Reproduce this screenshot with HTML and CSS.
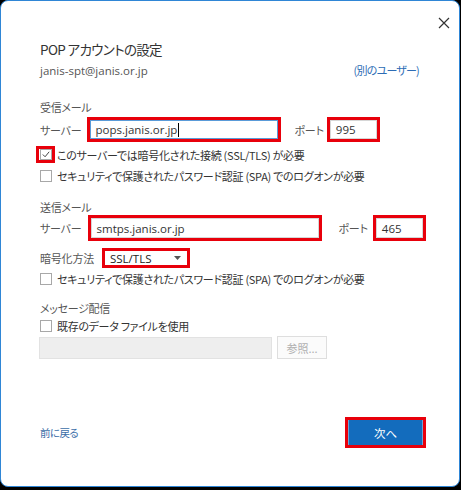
FILE: index.html
```html
<!DOCTYPE html>
<html lang="ja">
<head>
<meta charset="utf-8">
<link rel="stylesheet" href="styles.css">
</head>
<body>
<div class="win">
  <div class="topbar">
    <svg class="close" width="12" height="12" viewBox="0 0 12 12"><path d="M1 1L11 11M11 1L1 11" stroke="#333" stroke-width="1.2" fill="none"/></svg>
  </div>
  <div class="content">
    <div class="title">POP アカウントの設定</div>
    <div class="userrow">
      <span class="email">janis-spt@janis.or.jp</span>
      <span class="other">(別のユーザー)</span>
    </div>

    <div class="section">受信メール</div>
    <div class="row srv1">
      <span class="lbl">サーバー</span>
      <div class="mark host1"><div class="field focus">pops.janis.or.jp<span class="caret"></span></div></div>
      <span class="lbl port-lbl1">ポート</span>
      <div class="mark port1"><div class="field">995</div></div>
    </div>
    <div class="row chk1">
      <div class="mark cbmark"><span class="cb checked"><svg width="11" height="11" viewBox="0 0 11 11"><path d="M2 5.5L4.5 8L9 2.5" stroke="#444" stroke-width="1.1" fill="none"/></svg></span></div>
      <span class="cbtext">このサーバーでは暗号化された接続 (SSL/TLS) が必要</span>
    </div>
    <div class="row chk2">
      <span class="cb"></span>
      <span class="cbtext">セキュリティで保護されたパスワード認証 (SPA) でのログオンが必要</span>
    </div>

    <div class="section sec2">送信メール</div>
    <div class="row srv2">
      <span class="lbl">サーバー</span>
      <div class="mark host2"><div class="field">smtps.janis.or.jp</div></div>
      <span class="lbl port-lbl2">ポート</span>
      <div class="mark port2"><div class="field">465</div></div>
    </div>
    <div class="row enc">
      <span class="lbl">暗号化方法</span>
      <div class="mark sel"><div class="select">SSL/TLS<svg class="arrow" width="7" height="4" viewBox="0 0 7 4"><path d="M0 0H7L3.5 4Z" fill="#555"/></svg></div></div>
    </div>
    <div class="row chk3">
      <span class="cb"></span>
      <span class="cbtext">セキュリティで保護されたパスワード認証 (SPA) でのログオンが必要</span>
    </div>

    <div class="section sec3">メッセージ配信</div>
    <div class="row chk4">
      <span class="cb"></span>
      <span class="cbtext">既存のデータ ファイルを使用</span>
    </div>
    <div class="row filerow">
      <div class="disfield"></div>
      <div class="browse">参照...</div>
    </div>

    <div class="footer">
      <span class="back">前に戻る</span>
      <div class="mark nextmark"><div class="next">次へ</div></div>
    </div>
  </div>
</div>
</body>
</html>
```

FILE: styles.css
```css
html, body {
  margin: 0;
  padding: 0;
  background: #000;
}
body {
  width: 461px;
  height: 490px;
  font-family: "Noto Sans CJK JP", "Noto Sans", sans-serif;
  font-feature-settings: "palt";
  color: #333;
  white-space: nowrap;
}
.win {
  box-sizing: border-box;
  width: 460px;
  height: 487px;
  background: #fff;
  border: 1px solid #2f86d6;
  border-radius: 8px;
  position: relative;
}
.topbar {
  height: 30px;
  display: flex;
  justify-content: flex-end;
  align-items: flex-end;
  padding-right: 9px;
}
.close { display: block; margin-bottom: 2px; }
.content {
  padding-left: 39px;
  padding-right: 33px;
}
.title {
  font-size: 13.5px;
  letter-spacing: -0.65px;
  color: #333;
  margin-top: 8px;
  line-height: 20px;
}
.userrow {
  display: flex;
  justify-content: space-between;
  align-items: center;
  height: 20px;
  margin-top: 1px;
  font-size: 11px;
}
.email { color: #555; font-family: "Open Sans", sans-serif; font-size: 11.5px; }
.other { color: #2d6cb5; margin-right: 7px; letter-spacing: -0.8px; }
.section {
  font-size: 11px;
  letter-spacing: -0.3px;
  color: #555;
  margin-top: 19px;
  line-height: 16px;
}
.sec2 { margin-top: 15px; }
.sec3 { margin-top: 13px; }
.row {
  display: flex;
  align-items: center;
  font-size: 11px;
}
.lbl { color: #555; font-size: 11px; letter-spacing: -0.2px; }
.mark {
  box-sizing: border-box;
  border: 3px solid #e8000b;
  flex: none;
}
.field {
  box-sizing: border-box;
  height: 100%;
  border: 1px solid #d6d6d6;
  display: flex;
  align-items: center;
  padding-left: 5px;
  font-size: 11.5px;
  color: #333;
  font-family: "Open Sans", "Noto Sans CJK JP", sans-serif;
}
.field.focus { border-color: #5a9bd8; }
.caret {
  display: inline-block;
  width: 1px;
  height: 14px;
  background: #000;
  margin-left: 1px;
}
.srv1 { margin-top: 2px; height: 25px; }
.host1 { width: 194px; height: 25px; margin-left: 5px; }
.port-lbl1 { margin-left: 14px; }
.port1 { width: 53px; height: 25px; margin-left: 3px; }
.chk1 { margin-top: 4px; margin-left: -4px; height: 17px; }
.cbmark {
  width: 19px;
  height: 17px;
  display: flex;
  align-items: center;
  justify-content: center;
}
.cb {
  box-sizing: border-box;
  width: 12px;
  height: 12px;
  border: 1px solid #a8a8a8;
  background: #fff;
  display: inline-flex;
  align-items: center;
  justify-content: center;
  flex: none;
}
.cb.checked { width: 12px; height: 11px; }
.cb svg { display: block; }
.cbtext { margin-left: 5px; color: #333; font-size: 11px; letter-spacing: -0.3px; }
.chk1 .cbtext { margin-left: 2px; }
.chk2 { margin-top: 4px; height: 17px; }
.srv2 { margin-top: 0px; height: 26px; }
.host2 { width: 234px; height: 26px; margin-left: 6px; }
.port-lbl2 { margin-left: 17px; }
.port2 { width: 53px; height: 26px; margin-left: 5px; }
.enc { margin-top: 7px; height: 20px; }
.sel { width: 88px; height: 20px; margin-left: 8px; }
.select {
  height: 100%;
  display: flex;
  align-items: center;
  padding-left: 5px;
  font-size: 11.5px;
  font-family: "Open Sans", sans-serif;
  color: #222;
  position: relative;
}
.arrow { position: absolute; right: 6px; top: 5px; }
.chk3 { margin-top: 2px; height: 17px; }
.chk4 { margin-top: 1px; height: 17px; }
.filerow { margin-top: 2px; height: 23px; }
.disfield {
  box-sizing: border-box;
  width: 233px;
  height: 22px;
  margin-left: -1px;
  background: #eeeeee;
  border: 1px solid #e2e2e2;
}
.browse {
  box-sizing: border-box;
  width: 50px;
  height: 23px;
  margin-left: 5px;
  border: 1px solid #dedede;
  background: #fbfbfb;
  color: #b0b0b0;
  font-size: 11px;
  display: flex;
  align-items: center;
  justify-content: center;
}
.footer {
  display: flex;
  justify-content: space-between;
  align-items: center;
  margin-top: 58px;
  height: 31px;
}
.back { color: #3b6ea8; font-size: 10.5px; letter-spacing: -0.6px; }
.nextmark { width: 81px; height: 31px; }
.next {
  height: 100%;
  background: #136cbd;
  border-left: 1px solid #6aa3d6;
  border-right: 1px solid #6aa3d6;
  color: #fff;
  font-size: 11.5px;
  display: flex;
  align-items: center;
  justify-content: center;
}
```
